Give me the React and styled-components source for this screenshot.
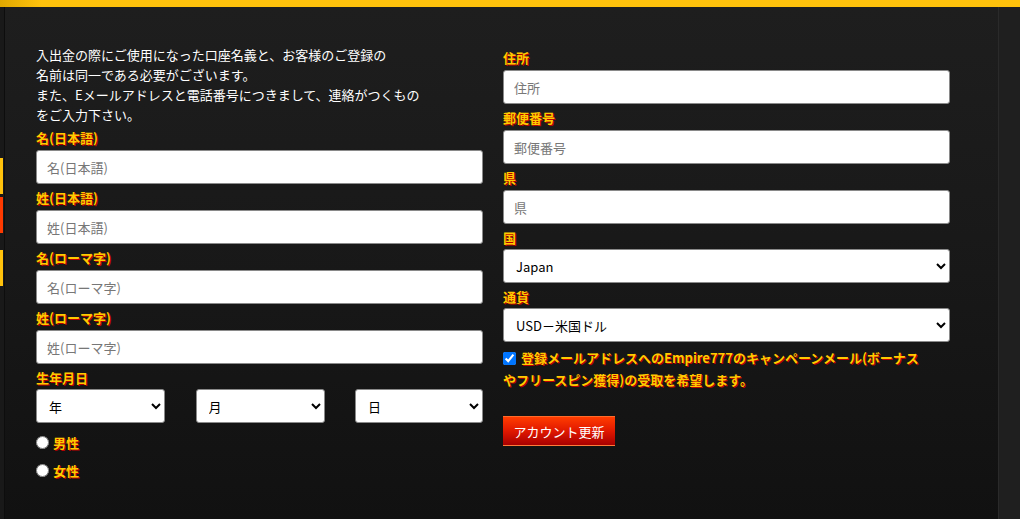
import styled, { createGlobalStyle } from "styled-components";

const GlobalStyle = createGlobalStyle`
  html, body {
    margin: 0;
    padding: 0;
    background: #1f1f1f;
    font-family: "Noto Sans CJK JP", "Noto Sans", sans-serif;
  }
  * { box-sizing: border-box; }
`;

const Page = styled.div`
  width: 1020px;
  height: 519px;
  display: flex;
  flex-direction: column;
  overflow: hidden;
`;

const TopBar = styled.div`
  height: 7px;
  flex-shrink: 0;
  background: linear-gradient(90deg, #e0a800 0%, #ffc20c 4%, #ffc20c 100%);
`;

const Body = styled.div`
  flex: 1;
  display: flex;
`;

const LeftRail = styled.div`
  width: 4px;
  background: #191919;
  border-right: 1px solid #0d0d0d;
  padding-top: 151px;
  display: flex;
  flex-direction: column;
  box-sizing: content-box;
`;

const Tab = styled.div`
  width: 3px;
  height: 36px;
  margin-bottom: ${(p) => p.$gap}px;
  background: ${(p) => p.$color};
`;

const Panel = styled.div`
  width: 994px;
  background: linear-gradient(180deg, #1e1e1e 0%, #191919 45%, #111111 100%);
  border-right: 1px solid #2a2a2a;
  padding: 38px 0 0 31px;
  display: grid;
  grid-template-columns: 447px 447px;
  column-gap: 20px;
  align-items: start;
`;

const RightRail = styled.div`
  flex: 1;
  background: #1f1f1f;
`;

const Column = styled.div`
  display: flex;
  flex-direction: column;
  padding-top: ${(p) => p.$top || 0}px;
`;

const Intro = styled.p`
  margin: 0 0 3px;
  color: #ffffff;
  font-size: 13px;
  line-height: 20px;
`;

const Label = styled.label`
  display: block;
  color: #ffca00;
  font-size: 13px;
  font-weight: bold;
  line-height: 20px;
  margin-bottom: ${(p) => (p.$tight ? 1 : 2)}px;
  text-shadow: 1px 1px 0 #b80000;
`;

const TextInput = styled.input`
  display: block;
  width: 100%;
  height: 34px;
  margin: 0 0 4px;
  padding: 0 10px;
  border: 1px solid #8a8a8a;
  border-radius: 3px;
  background: #fff;
  font-family: "Noto Sans CJK JP", sans-serif;
  font-size: 13px;
  color: #333;
  &::placeholder { color: #777; }
`;

const Select = styled.select`
  display: block;
  width: 100%;
  height: 34px;
  margin: 0 0 4px;
  padding: 0 8px;
  border: 1px solid #8a8a8a;
  border-radius: 3px;
  background: #fff;
  color: #000;
  font-family: "Noto Sans CJK JP", sans-serif;
  font-size: 13px;
`;

const DateRow = styled.div`
  display: grid;
  grid-template-columns: 129px 129px 128px;
  justify-content: space-between;
  margin-bottom: 5px;
  select { margin: 0; }
`;

const RadioRow = styled.label`
  display: flex;
  align-items: center;
  gap: 4px;
  height: 28px;
  color: #ffca00;
  font-size: 13px;
  font-weight: bold;
  text-shadow: 1px 1px 0 #b80000;
  input {
    margin: 0;
    width: 13px;
    height: 13px;
  }
`;

const CheckText = styled.label`
  display: block;
  margin-top: 1px;
  color: #ffca00;
  font-size: 13px;
  font-weight: bold;
  line-height: 22px;
  text-shadow: 1px 1px 0 #b80000;
  input {
    margin: 0 5px 0 0;
    width: 13px;
    height: 13px;
    vertical-align: -2px;
  }
`;

const Button = styled.button`
  align-self: flex-start;
  margin-top: 25px;
  width: 112px;
  height: 30px;
  padding: 0;
  border: none;
  border-bottom: 1px solid #ff7a3a;
  border-top: 1px solid #ff6a2a;
  background: linear-gradient(180deg, #ff3c00 0%, #e01800 50%, #a80000 100%);
  color: #fff;
  font-family: "Noto Sans CJK JP", sans-serif;
  font-size: 13px;
  cursor: pointer;
`;

const leftFields = ["名(日本語)", "姓(日本語)", "名(ローマ字)", "姓(ローマ字)"];
const rightFields = ["住所", "郵便番号", "県"];

export default function App() {
  return (
    <Page>
      <GlobalStyle />
      <TopBar />
      <Body>
        <LeftRail>
          <Tab $color="#ffc20c" $gap={3} />
          <Tab $color="#ff3a00" $gap={17} />
          <Tab $color="#ffc20c" $gap={0} />
        </LeftRail>
        <Panel>
          <Column>
            <Intro>
              入出金の際にご使用になった口座名義と、お客様のご登録の
              <br />
              名前は同一である必要がございます。
              <br />
              また、Eメールアドレスと電話番号につきまして、連絡がつくもの
              <br />
              をご入力下さい。
            </Intro>
            {leftFields.map((f) => (
              <div key={f}>
                <Label>{f}</Label>
                <TextInput placeholder={f} />
              </div>
            ))}
            <Label $tight>生年月日</Label>
            <DateRow>
              <Select defaultValue="年">
                <option>年</option>
              </Select>
              <Select defaultValue="月">
                <option>月</option>
              </Select>
              <Select defaultValue="日">
                <option>日</option>
              </Select>
            </DateRow>
            <RadioRow>
              <input type="radio" name="sex" />
              男性
            </RadioRow>
            <RadioRow>
              <input type="radio" name="sex" />
              女性
            </RadioRow>
          </Column>
          <Column $top={3}>
            {rightFields.map((f) => (
              <div key={f}>
                <Label>{f}</Label>
                <TextInput placeholder={f} />
              </div>
            ))}
            <Label $tight>国</Label>
            <Select defaultValue="Japan">
              <option>Japan</option>
            </Select>
            <Label $tight>通貨</Label>
            <Select defaultValue="USD">
              <option value="USD">USD－米国ドル</option>
            </Select>
            <CheckText>
              <input type="checkbox" defaultChecked />
              登録メールアドレスへのEmpire777のキャンペーンメール(ボーナス
              <br />
              やフリースピン獲得)の受取を希望します。
            </CheckText>
            <Button>アカウント更新</Button>
          </Column>
        </Panel>
        <RightRail />
      </Body>
    </Page>
  );
}
